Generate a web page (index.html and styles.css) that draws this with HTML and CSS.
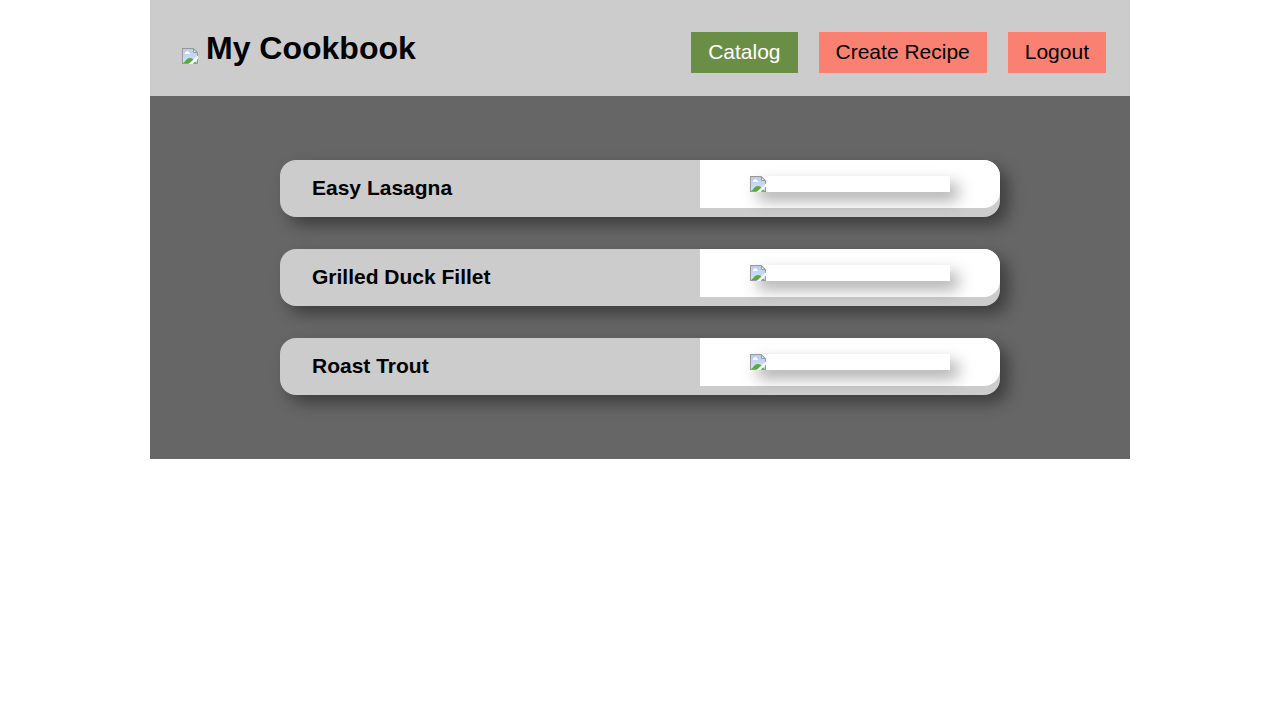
FILE: index.html
```html
<!DOCTYPE html>
<html lang="en">
<head>
  <meta charset="utf-8">
  <meta name="viewport" content="width=device-width, initial-scale=1">
  <title>My Cookbook</title>
  <link rel="stylesheet" href="styles.css">
</head>
<body>
  <svg class="defs" width="0" height="0" aria-hidden="true">
    <defs>
      <linearGradient id="sky" x1="0" y1="0" x2="0" y2="1">
        <stop offset="0" stop-color="#b9cdf3"/>
        <stop offset="1" stop-color="#d3e0f8"/>
      </linearGradient>
      <symbol id="picture" viewBox="0 0 16 16">
        <path d="M0 0H11.5L16 4.5V16H0Z" fill="#999"/>
        <path d="M1 1H11V5H15V15H1Z" fill="url(#sky)"/>
        <path d="M3 6V5Q3 4 4.3 4Q5 2.8 6 3.2Q7 3.5 7 4.4Q8.3 4.5 8 6Z" fill="#fff"/>
        <path d="M1 15C3.5 14 4 10 8 10C12 10 12 14 15 15Z" fill="#58ad38"/>
        <path d="M11 1L15 5H11Z" fill="#f5f5f5"/>
        <path d="M11.5 1V4.5H15" fill="none" stroke="#999"/>
        <path d="M16 7.5V10.5L10.5 16H6.5Z" fill="#fff"/>
      </symbol>
    </defs>
  </svg>
  <div class="container">
    <header class="header">
      <h1 class="brand">
        <svg class="picture" aria-hidden="true"><use href="#picture"/></svg>
        <span>My Cookbook</span>
      </h1>
      <nav class="nav">
        <a class="nav-link active" href="#">Catalog</a>
        <a class="nav-link" href="#">Create Recipe</a>
        <a class="nav-link" href="#">Logout</a>
      </nav>
    </header>
    <main class="catalog">
      <article class="preview">
        <h2 class="title">Easy Lasagna</h2>
        <div class="small"><div class="thumb"><svg class="picture" aria-hidden="true"><use href="#picture"/></svg></div></div>
      </article>
      <article class="preview">
        <h2 class="title">Grilled Duck Fillet</h2>
        <div class="small"><div class="thumb"><svg class="picture" aria-hidden="true"><use href="#picture"/></svg></div></div>
      </article>
      <article class="preview">
        <h2 class="title">Roast Trout</h2>
        <div class="small"><div class="thumb"><svg class="picture" aria-hidden="true"><use href="#picture"/></svg></div></div>
      </article>
    </main>
  </div>
</body>
</html>
```

FILE: styles.css
```css
* {
  box-sizing: border-box;
}

body {
  margin: 0;
  background: #fff;
  color: #000;
  font-family: "Liberation Sans", Arial, sans-serif;
  font-size: 21px;
  line-height: 23px;
}

.defs {
  position: absolute;
}

.container {
  max-width: 980px;
  margin: 0 auto;
  background: #666;
}

.header {
  display: flex;
  flex-wrap: wrap;
  justify-content: space-between;
  align-items: flex-start;
  gap: 16px;
  padding: 32px 24px 23px 32px;
  background: #ccc;
}

.brand {
  display: flex;
  align-items: flex-end;
  gap: 8px;
  margin: 0;
  font-size: 32px;
  line-height: 32px;
}

.picture {
  display: block;
  flex: none;
  width: 16px;
  height: 16px;
}

.nav {
  display: flex;
  flex-wrap: wrap;
  gap: 21px;
}

.nav-link {
  padding: 8px 17px 10px;
  background: salmon;
  color: #000;
  text-decoration: none;
}

.nav-link.active {
  background: #6b8e47;
  color: #fff;
}

.catalog {
  display: flex;
  flex-direction: column;
  align-items: center;
  gap: 32px;
  padding: 64px 32px;
}

.preview {
  display: flex;
  justify-content: space-between;
  align-items: flex-start;
  width: 100%;
  max-width: 720px;
  border-radius: 16px;
  background: #ccc;
  box-shadow: 8px 8px 16px rgba(0, 0, 0, 0.4);
}

.title {
  margin: 0;
  padding: 16px 32px 18px;
  font-size: 21px;
  line-height: 23px;
}

.small {
  display: flex;
  justify-content: center;
  width: 300px;
  padding: 16px;
  border-radius: 0 16px 16px 0;
  background: #fff;
}

.thumb {
  width: 200px;
  box-shadow: 8px 8px 16px rgba(0, 0, 0, 0.35);
}
```
